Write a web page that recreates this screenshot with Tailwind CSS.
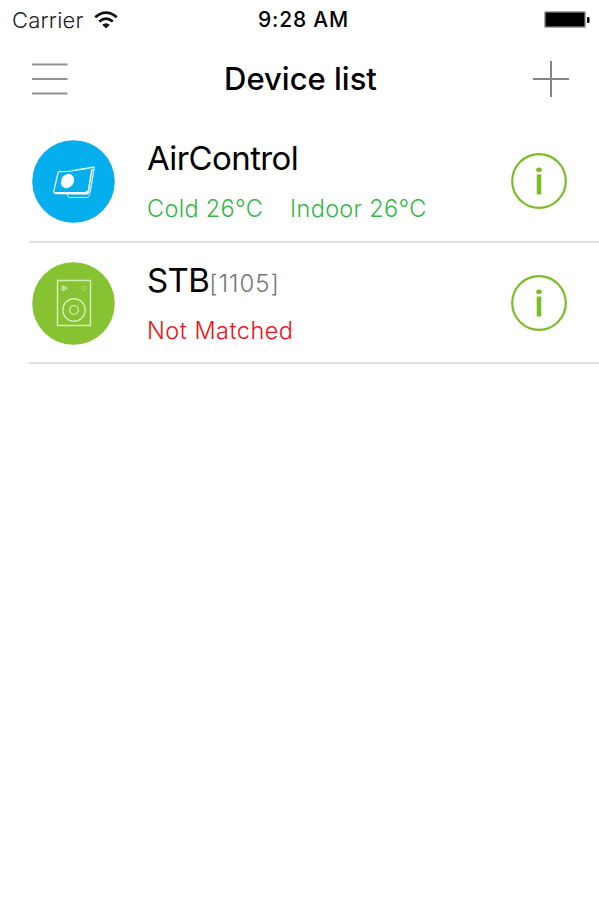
<!DOCTYPE html>
<html lang="en">
<head>
<meta charset="utf-8">
<title>Device list</title>
<script src="https://cdn.jsdelivr.net/npm/@tailwindcss/browser@4"></script>
</head>
<body class="h-[900px] w-[599px] overflow-hidden bg-white font-['Inter','Liberation_Sans',sans-serif] text-black">
<header>
  <div class="grid h-10 grid-cols-[200px_1fr_200px] items-center">
    <div class="flex items-center gap-[10px] pl-3">
      <span class="text-[22px] leading-10 font-light tracking-[0.2px] text-[#222]">Carrier</span>
      <svg class="h-[18px] w-6" viewBox="0 0 24 18" fill="none" stroke="#111" stroke-width="2.600">
        <path d="M1.200 6.300Q12-3 22.800 6.300M5.200 10.500Q12 4.800 18.800 10.500"/>
        <path d="M8.200 13.800Q12 10.800 15.800 13.800L12 17.500Z" fill="#111" stroke="none"/>
      </svg>
    </div>
    <div class="pl-[8px] text-center text-[21px] leading-10 font-medium tracking-[0.8px] whitespace-nowrap">9:28 AM</div>
    <div class="flex justify-end pr-[9px]">
      <svg class="mt-[-2px] h-[18px] w-[46px]" viewBox="0 0 46 18">
        <rect x="0" y="1" width="42" height="17" rx="1.500" fill="#aaa"/>
        <rect x="1.500" y="2.500" width="39" height="14" fill="#000"/>
        <rect x="43" y="7" width="2.500" height="6" rx="1" fill="#000"/>
      </svg>
    </div>
  </div>
  <div class="flex h-[78px] items-center justify-between pr-[30px] pl-8">
    <svg class="h-9 w-9" viewBox="0 0 36 36" stroke="#929292" stroke-width="2"><path d="M0 3.500H35.500M0 18H35.500M0 32.500H35.500"/></svg>
    <h1 class="text-[31px] leading-10 font-medium whitespace-nowrap">Device list</h1>
    <svg class="h-9 w-9" viewBox="0 0 36 36" stroke="#858585" stroke-width="2"><path d="M0 18H36M18 0V36"/></svg>
  </div>
</header>
<main>
  <section class="ml-[29px] flex h-[125px] items-center border-b-2 border-[#dfdfdf] pr-8 pl-[3px]">
    <svg class="mt-[4px] h-[83px] w-[83px]" viewBox="0 0 83 83" fill="none" stroke="#fff" stroke-linejoin="round">
      <circle cx="41.500" cy="41.500" r="41.300" fill="#05aeed" stroke="none"/>
      <path d="M27 31.500Q37 32 44 30Q52 29 59.500 27.500Q63 26 62 29L58.500 50Q57.500 54 53 54L24 53.500Q21 53.500 22 50L26 33Z" stroke-width="1.300" opacity=".85"/>
      <path d="M60 29L56.500 50Q56 52.500 52 52.800L22.500 52.800" stroke-width="1.500"/>
      <path d="M35 54L37 57.500H55Q57.500 57.500 58 53" stroke-width="1" opacity=".75"/>
      <ellipse cx="35.500" cy="41" rx="6.300" ry="7.500" transform="rotate(32 35.500 41)" fill="#fff" stroke="none"/>
    </svg>
    <div class="ml-8 flex grow flex-col pt-[7px]">
      <h2 class="h-[50px] text-[33px] leading-[50px] font-normal tracking-[-0.600px] whitespace-nowrap">AirControl</h2>
      <p class="flex h-[50px] gap-[27px] text-[23.500px] leading-[51px] font-light tracking-[0.300px] whitespace-nowrap text-[#35b548]"><span>Cold 26°C</span><span>Indoor 26°C</span></p>
    </div>
    <svg class="mt-[2px] h-14 w-14" viewBox="0 0 56 56" fill="#7cbd27"><circle cx="28" cy="28" r="26.800" fill="none" stroke="#7cbd27" stroke-width="2.200"/><ellipse cx="28" cy="16.700" rx="2.800" ry="2.300"/><path d="M25.700 21.500h4.600v20h-4.600z"/></svg>
  </section>
  <section class="ml-[29px] flex h-[121px] items-center border-b-2 border-[#dfdfdf] pr-8 pl-[3px]">
    <svg class="mt-[1px] h-[83px] w-[83px]" viewBox="0 0 83 83" fill="none" stroke="#d3eeb0">
      <circle cx="41.500" cy="41.500" r="41.300" fill="#86c232" stroke="none"/>
      <rect x="25.500" y="18.500" width="33" height="45" stroke-width="1.500"/>
      <circle cx="42" cy="48" r="11.200" stroke-width="1.400"/>
      <circle cx="42" cy="48" r="4.300" stroke-width="1.300"/>
      <path d="M30 24L32 24L35.500 26.200L32 28.500L30 28.500Z" fill="#b8de83" stroke-width=".7"/>
      <path d="M52 23.500L54.500 26.200L52 29L49.500 26.200Z" stroke-width=".8" opacity=".7"/>
    </svg>
    <div class="ml-8 flex grow flex-col pt-[5px]">
      <h2 class="h-[50px] text-[33px] leading-[50px] font-normal tracking-[-0.600px] whitespace-nowrap">STB<span class="text-[24px] leading-none font-light tracking-[1px] text-[#777]">[1105]</span></h2>
      <p class="h-[50px] text-[23.500px] leading-[52px] font-light tracking-[0.500px] whitespace-nowrap text-[#f01216]">Not Matched</p>
    </div>
    <svg class="h-14 w-14" viewBox="0 0 56 56" fill="#7cbd27"><circle cx="28" cy="28" r="26.800" fill="none" stroke="#7cbd27" stroke-width="2.200"/><ellipse cx="28" cy="16.700" rx="2.800" ry="2.300"/><path d="M25.700 21.500h4.600v20h-4.600z"/></svg>
  </section>
</main>
</body>
</html>
